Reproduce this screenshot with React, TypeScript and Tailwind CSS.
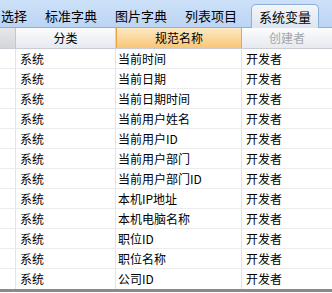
import React from "react";

const tabs = ["选择", "标准字典", "图片字典", "列表项目", "系统变量"];

const rows = [
  "当前时间",
  "当前日期",
  "当前日期时间",
  "当前用户姓名",
  "当前用户ID",
  "当前用户部门",
  "当前用户部门ID",
  "本机IP地址",
  "本机电脑名称",
  "职位ID",
  "职位名称",
  "公司ID",
];

const App = () => {
  return (
    <div
      className="w-[332px] h-[293px] overflow-hidden bg-white text-black"
      style={{ fontFamily: '"Microsoft YaHei", "Noto Sans CJK SC", sans-serif' }}
    >
      {/* tab strip */}
      <div className="h-[28px] flex items-end bg-gradient-to-b from-[#cde1f9] to-[#bcd5f4] border-b border-[#8eaedb] -ml-[8px]">
        {tabs.map((t, i) =>
          i === tabs.length - 1 ? (
            <div
              key={t}
              className="h-[24px] ml-[5px] -mb-px px-[7px] flex items-center text-[13px] leading-none rounded-t-[5px] border border-b-0 border-[#8eaedb] bg-gradient-to-b from-[#f3f6fa] to-[#dde5ef]"
            >
              {t}
            </div>
          ) : (
            <div
              key={t}
              className="h-[23px] px-[9px] flex items-center text-[13px] leading-none"
            >
              {t}
            </div>
          )
        )}
      </div>

      {/* header */}
      <div className="flex h-[21px] text-[12px] leading-none border-b border-[#c9ccd2]">
        <div className="w-[16px] bg-gradient-to-b from-[#e6e8eb] to-[#d3d6da] border-r border-[#c3c6cc]" />
        <div className="w-[100px] flex items-center justify-center bg-gradient-to-b from-[#fbfcfd] to-[#e6e9ee] border-r border-[#d0d3d8]">
          分类
        </div>
        <div className="w-[126px] flex items-center justify-center bg-gradient-to-b from-[#fde9c4] to-[#f8c676] border-x border-[#f2a43a]">
          规范名称
        </div>
        <div className="flex-1 flex items-center justify-center text-[#a3a6ab] bg-gradient-to-b from-[#fbfcfd] to-[#e6e9ee]">
          创建者
        </div>
      </div>

      {/* rows */}
      <div className="border-b-[3px] border-[#8a8a8a]">
        {rows.map((r) => (
          <div
            key={r}
            className="flex h-[20px] text-[12px] leading-none border-b border-[#ececec] last:border-b-0"
          >
            <div className="w-[16px] border-r border-[#e3e3e3]" />
            <div className="w-[100px] pl-[4px] flex items-center border-r border-[#e3e3e3]">
              系统
            </div>
            <div className="w-[126px] pl-[2px] flex items-center border-r border-[#e3e3e3]">
              {r}
            </div>
            <div className="flex-1 pl-[4px] flex items-center">开发者</div>
          </div>
        ))}
      </div>
    </div>
  );
};

export default App;
